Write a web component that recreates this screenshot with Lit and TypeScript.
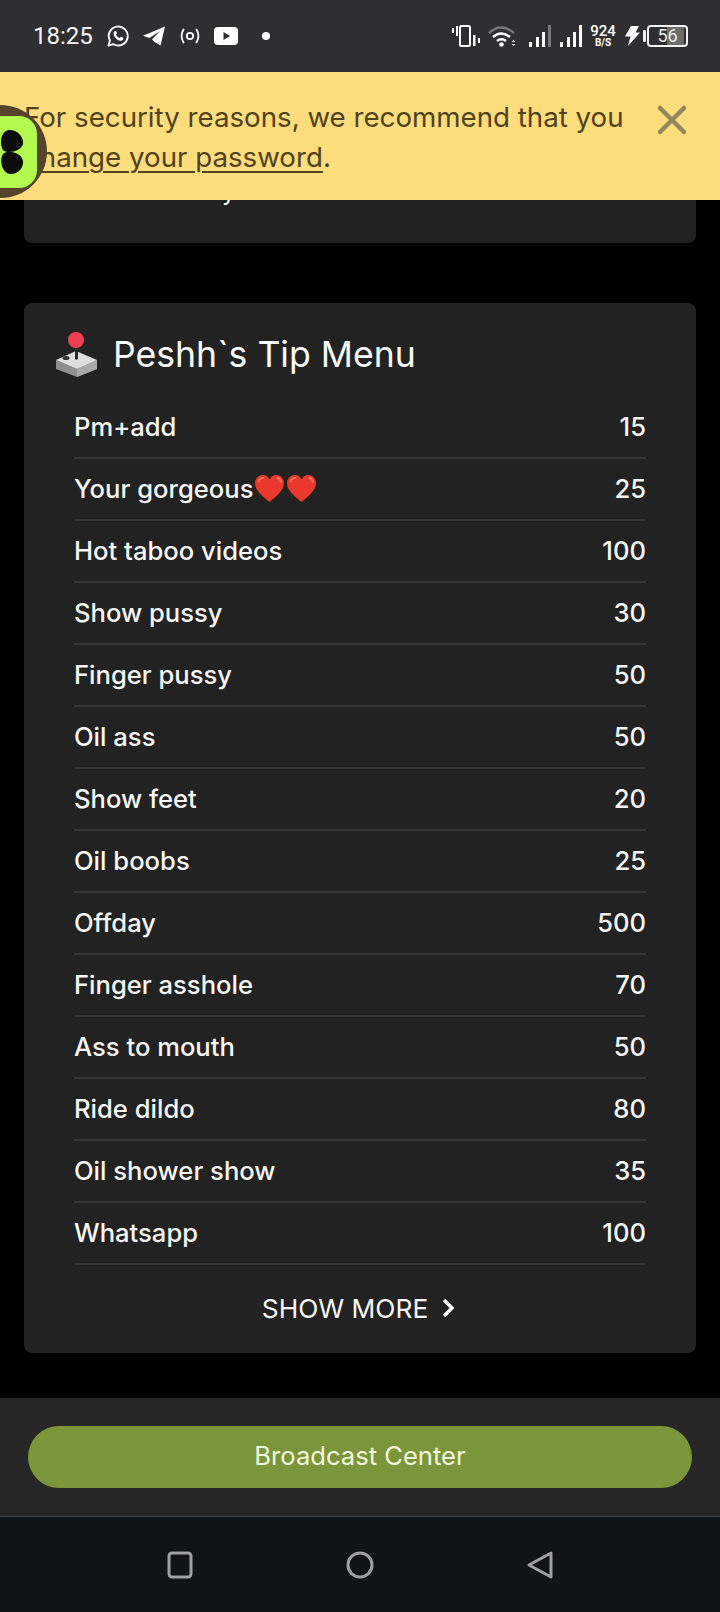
import { LitElement, css, html, svg } from 'lit';
import { customElement } from 'lit/decorators.js';

const TIPS: [string, number, number?][] = [
  ['Pm+add', 15],
  ['Your gorgeous', 25, 2],
  ['Hot taboo videos', 100],
  ['Show pussy', 30],
  ['Finger pussy', 50],
  ['Oil ass', 50],
  ['Show feet', 20],
  ['Oil boobs', 25],
  ['Offday', 500],
  ['Finger asshole', 70],
  ['Ass to mouth', 50],
  ['Ride dildo', 80],
  ['Oil shower show', 35],
  ['Whatsapp', 100],
];

const heart = html`<svg class="heart" viewBox="0 0 32 30">
  <path d="M16 29C9 23 1 17 1 9.500C1 4.500 5 1 9 1c3 0 5.500 1.500 7 4.500C17.500 2.500 20 1 23 1c4 0 8 3.500 8 8.500C31 17 23 23 16 29z" fill="#e8392c" />
  <path d="M5 8c.5-2.500 2.500-4 4.500-4M24 4c2 .3 3.500 2 3.800 4" fill="none" stroke="#f4796c" stroke-width="1.600" stroke-linecap="round" />
</svg>`;

const joystick = svg`
  <path d="M11 36l21 9 20-9v9l-20 8-21-8z" fill="#8f8f8f" />
  <path d="M32 45l20-9v9l-20 8z" fill="#a9a9a9" />
  <path d="M11 36l20-9 21 9-20 9z" fill="#dedede" />
  <ellipse cx="21" cy="34" rx="3.500" ry="2" fill="#333" />
  <path d="M30 18h3v17q-1.500 1.500-3 0z" fill="#2b2b2b" />
  <circle cx="31" cy="16" r="8" fill="#ee3f52" />`;

@customElement('status-bar')
export class StatusBar extends LitElement {
  static styles = css`
    :host {
      display: flex;
      align-items: center;
      height: 72px;
      padding: 0 32px 0 33px;
      box-sizing: border-box;
      background: #2f2f31;
      color: #fff;
      font-family: Roboto, sans-serif;
    }
    svg {
      display: block;
      flex: none;
    }
    .time {
      font-size: 24px;
      width: 60px;
      color: #f4f4f4;
    }
    .left {
      display: flex;
      align-items: center;
      gap: 14px;
    }
    .dot {
      width: 8px;
      height: 8px;
      margin-left: 10px;
      border-radius: 50%;
      background: #fff;
    }
    .right {
      display: flex;
      align-items: center;
      gap: 8px;
      margin-left: auto;
    }
    .speed {
      width: 26px;
      margin-right: 1px;
      text-align: center;
      font-weight: 500;
      line-height: 13px;
      font-size: 15px;
    }
    .speed small {
      display: block;
      font-size: 10px;
      line-height: 10px;
      font-weight: 700;
    }
    .battery {
      width: 41px;
      height: 22px;
      box-sizing: border-box;
      margin-left: -7px;
      border: 2px solid #f2f2f2;
      border-radius: 4px;
      text-align: center;
      font-size: 18px;
      line-height: 18px;
      color: #e8e8e8;
      background: linear-gradient(90deg, transparent 50%, #6d6d6d 50%, #6d6d6d 94%, transparent 94%);
    }
    .tip {
      width: 3px;
      height: 12px;
      margin-left: -5px;
      border-radius: 1px;
      background: #eee;
    }
  `;

  render() {
    return html`
      <div class="left">
        <span class="time">18:25</span>
        <svg width="22" height="22" viewBox="0 0 22 22">
          <path d="M1.500 20.500l1.400-5A9.500 9.500 0 1 1 6.500 19.200z" fill="none" stroke="#fff" stroke-width="1.900" stroke-linejoin="round" />
          <path d="M7.800 6c-.8.600-1.300 1.500-1.200 2.700.2 3 3.600 6.600 6.800 7 1.300.100 2.300-.5 2.800-1.500.2-.5.200-1 .100-1.200l-2.300-1.200-1.200 1.300c-1.700-.6-3.100-2-3.800-3.700l1-1.200L9.100 6z" fill="#fff" />
        </svg>
        <svg width="22" height="20" viewBox="0 0 22 20">
          <path d="M22 .5L17.500 19.500 11.500 16 9 13.500 17 5 6.500 12 0 9.800z" fill="#fff" />
        </svg>
        <svg width="22" height="16" viewBox="0 0 22 16">
          <circle cx="11" cy="8" r="3.200" fill="none" stroke="#fff" stroke-width="1.800" />
          <path d="M4.500 1.500Q.6 8 4.500 14.500M17.500 1.500q3.900 6.500 0 13" fill="none" stroke="#fff" stroke-width="1.800" stroke-linecap="round" />
        </svg>
        <svg width="24" height="18" viewBox="0 0 24 18" style="margin-left:-1px">
          <rect width="24" height="18" rx="4" fill="#fff" />
          <path d="M9.500 5l6.500 4-6.500 4z" fill="#2f2f31" />
        </svg>
        <span class="dot"></span>
      </div>
      <div class="right">
        <svg width="29" height="22" viewBox="0 0 29 22">
          <rect x="9" y="1" width="10" height="20" rx="1.500" fill="none" stroke="#fff" stroke-width="2" />
          <path d="M1 3h2v5H1zM5 1h2v10H5zM22 10h2.500v11H22zM27 13h2v5h-2z" fill="#fff" />
        </svg>
        <svg width="29" height="22" viewBox="0 0 29 22">
          <path d="M1 8Q13-3 26 8" fill="none" stroke="#777" stroke-width="2.400" />
          <path d="M5 12q8-7 17 0M9 16q4.500-3.500 9 0" fill="none" stroke="#fff" stroke-width="2.400" />
          <circle cx="13.500" cy="19.500" r="2.300" fill="#fff" />
          <path d="M25.500 15l2 2h-4zM23.500 19h4l-2 2z" fill="#ddd" />
        </svg>
        <svg width="22" height="22" viewBox="0 0 22 22" style="margin-left:4px">
          <path d="M0 17h3v5H0zM7 12h3v10H7zM13 7h3v15h-3z" fill="#fff" />
          <path d="M19 0h3v22h-3z" fill="#777" />
        </svg>
        <svg width="22" height="22" viewBox="0 0 22 22" style="margin-left:1px">
          <path d="M0 17h3v5H0zM7 12h3v10H7zM13 7h3v15h-3zM19 0h3v22h-3z" fill="#fff" />
        </svg>
        <div class="speed">924<small>B/S</small></div>
        <svg width="15" height="20" viewBox="0 0 15 20">
          <path d="M6 0h8L10.500 6.500H15L3 20l2.500-9.500H0z" fill="#fff" />
        </svg>
        <span class="tip"></span>
        <div class="battery">56</div>
      </div>
    `;
  }
}

@customElement('app-root')
export class AppRoot extends LitElement {
  static styles = css`
    :host {
      display: block;
      position: relative;
      width: 720px;
      height: 1612px;
      overflow: hidden;
      background: #000;
      font-family: Inter, sans-serif;
    }
    .page {
      display: flex;
      flex-direction: column;
      height: 100%;
    }
    main {
      flex: 1;
      display: flex;
      flex-direction: column;
      gap: 60px;
      padding: 0 24px;
    }
    .card {
      background: #222;
      border-radius: 8px;
      color: #fff;
    }
    .card.cut {
      height: 171px;
      border-radius: 0 0 8px 8px;
      box-sizing: border-box;
    }
    .hint {
      padding: 108px 0 0 198px;
      font-size: 24px;
      line-height: 24px;
    }
    .menu {
      height: 1050px;
      display: flex;
      flex-direction: column;
    }
    .head {
      display: flex;
      align-items: center;
      gap: 8px;
      height: 94px;
      padding: 8px 0 0 21px;
      box-sizing: border-box;
      font-size: 35.6px;
      font-weight: 400;
      color: #fafafa;
    }
    .head svg {
      width: 60px;
      height: 60px;
      flex: none;
    }
    .rows {
      margin: 0 50px;
    }
    .row {
      display: flex;
      justify-content: space-between;
      align-items: center;
      height: 62px;
      padding-bottom: 2px;
      box-sizing: border-box;
      border-bottom: 2px solid #363636;
      font-size: 25.6px;
      font-weight: 500;
      color: #f6f6f6;
    }
    .name {
      display: flex;
      align-items: center;
    }
    .heart {
      width: 31px;
      height: 29px;
      margin-left: 1px;
    }
    .more {
      flex: 1;
      display: flex;
      align-items: center;
      justify-content: center;
      gap: 14px;
      padding: 0 4px 2px 0;
      font-size: 26.3px;
      color: #f6f6f6;
    }
    footer {
      display: flex;
      align-items: center;
      justify-content: center;
      height: 118px;
      background: #262626;
    }
    .broadcast {
      width: 664px;
      height: 62px;
      box-sizing: border-box;
      padding-bottom: 3px;
      display: flex;
      align-items: center;
      justify-content: center;
      border-radius: 31px;
      background: #7b953b;
      color: #f0f7dc;
      font-size: 25.6px;
    }
    nav {
      height: 96px;
      box-sizing: border-box;
      display: flex;
      align-items: center;
      justify-content: center;
      gap: 152px;
      padding-top: 1px;
      border-top: 1px solid #42484f;
      background: #0f141b;
    }
    nav svg {
      display: block;
      width: 28px;
      height: 28px;
      stroke: #9da0a5;
      stroke-width: 3;
      fill: none;
    }
    .banner {
      position: absolute;
      top: 72px;
      left: 0;
      right: 0;
      height: 128px;
      display: flex;
      align-items: flex-start;
      justify-content: space-between;
      padding: 25px 32px 0 24px;
      box-sizing: border-box;
      background: #fddc7c;
      color: #51431d;
      font-size: 27.7px;
      line-height: 40px;
    }
    .banner a {
      color: inherit;
      text-decoration: underline;
      text-underline-offset: 4px;
      text-decoration-thickness: 2px;
    }
    .close {
      width: 32px;
      height: 32px;
      margin-top: 7px;
      flex: none;
      stroke: #93865a;
      stroke-width: 4.500;
      stroke-linecap: round;
    }
    .badge {
      position: absolute;
      left: -46px;
      top: 105px;
      width: 93px;
      height: 93px;
      display: flex;
      align-items: center;
      justify-content: center;
      border-radius: 50%;
      background: #54452a;
    }
    .badge div {
      width: 72px;
      height: 72px;
      border-radius: 18px;
      background: #b3f94e;
    }
    .badge svg {
      position: absolute;
      left: 46px;
      top: 24px;
      width: 24px;
      height: 46px;
    }
  `;

  render() {
    return html`
      <div class="page">
        <status-bar></status-bar>
        <main>
          <section class="card cut"><div class="hint">y</div></section>
          <section class="card menu">
            <div class="head">
              <svg viewBox="0 0 60 60">${joystick}</svg>
              <span>Peshh\`s Tip Menu</span>
            </div>
            <div class="rows">
              ${TIPS.map(
                ([name, price, hearts]) => html`
                  <div class="row">
                    <span class="name">${name}${hearts ? html`${heart}${heart}` : ''}</span>
                    <span>${price}</span>
                  </div>
                `,
              )}
            </div>
            <div class="more">
              SHOW MORE
              <svg width="12" height="20" viewBox="0 0 12 20">
                <path d="M2 2l8 8-8 8" fill="none" stroke="#fff" stroke-width="3.500" />
              </svg>
            </div>
          </section>
        </main>
        <footer><div class="broadcast">Broadcast Center</div></footer>
        <nav>
          <svg viewBox="0 0 28 28"><rect x="3" y="2" width="22" height="24" rx="3" /></svg>
          <svg viewBox="0 0 28 28"><circle cx="14" cy="14" r="12" /></svg>
          <svg viewBox="0 0 28 28"><path d="M25 2v24L3 14z" stroke-linejoin="round" /></svg>
        </nav>
      </div>
      <div class="banner">
        <div>
          For security reasons, we recommend that you<br />
          <a>change your password</a>.
        </div>
        <svg class="close" viewBox="0 0 32 32"><path d="M4 4l24 24M28 4L4 28" /></svg>
      </div>
      <div class="badge">
        <div></div>
        <svg viewBox="0 0 24 46">
          <path d="M3 21C-1 14 1 2 9 1c8-.500 15 7 14 14-1 6-15 11-20 6z" fill="#0c0c0c" />
          <path d="M3 25C8 20 22 24 23 32c1 7-6 14-13 13C2 44-1 31 3 25z" fill="#0c0c0c" />
        </svg>
      </div>
    `;
  }
}
